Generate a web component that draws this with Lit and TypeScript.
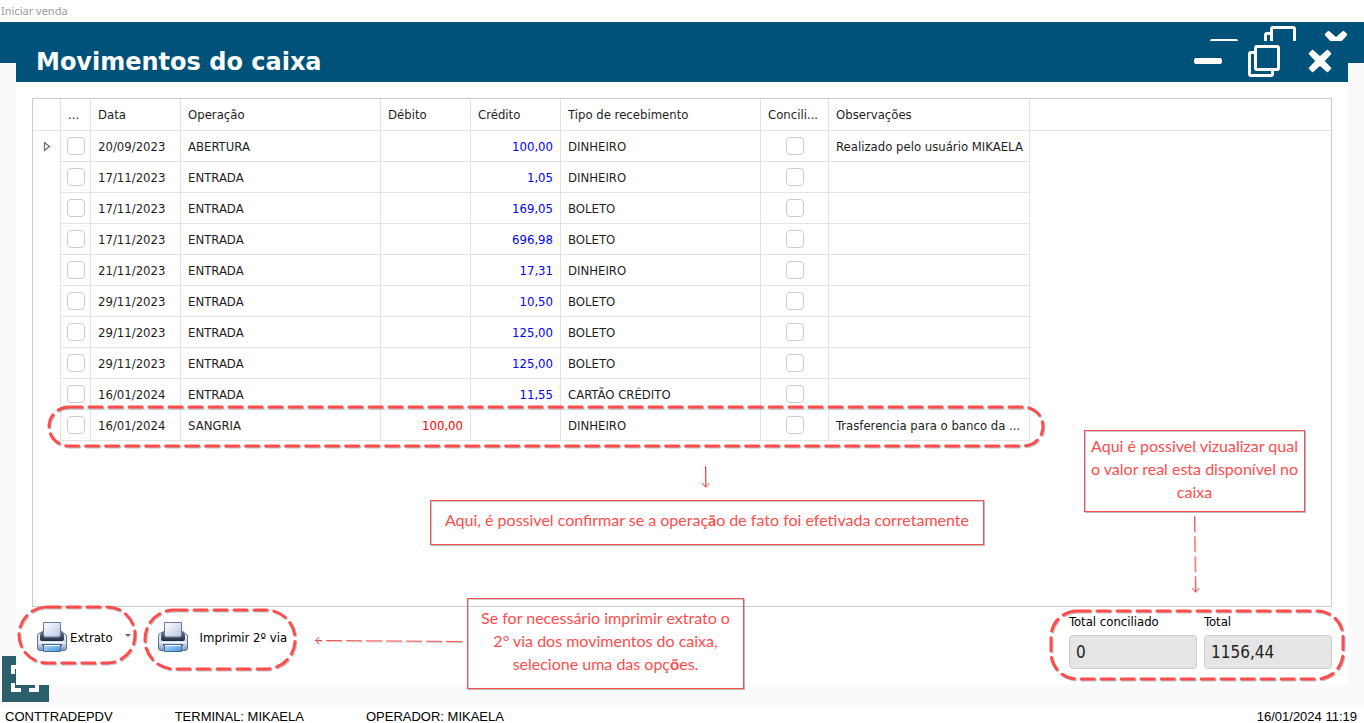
import { LitElement, html, svg, css, nothing } from "lit";
import { customElement, property } from "lit/decorators.js";

interface Movimento {
  data: string;
  operacao: string;
  debito?: string;
  credito?: string;
  tipo: string;
  obs?: string;
}

const MOVIMENTOS: Movimento[] = [
  { data: "20/09/2023", operacao: "ABERTURA", credito: "100,00", tipo: "DINHEIRO", obs: "Realizado pelo usuário MIKAELA" },
  { data: "17/11/2023", operacao: "ENTRADA", credito: "1,05", tipo: "DINHEIRO" },
  { data: "17/11/2023", operacao: "ENTRADA", credito: "169,05", tipo: "BOLETO" },
  { data: "17/11/2023", operacao: "ENTRADA", credito: "696,98", tipo: "BOLETO" },
  { data: "21/11/2023", operacao: "ENTRADA", credito: "17,31", tipo: "DINHEIRO" },
  { data: "29/11/2023", operacao: "ENTRADA", credito: "10,50", tipo: "BOLETO" },
  { data: "29/11/2023", operacao: "ENTRADA", credito: "125,00", tipo: "BOLETO" },
  { data: "29/11/2023", operacao: "ENTRADA", credito: "125,00", tipo: "BOLETO" },
  { data: "16/01/2024", operacao: "ENTRADA", credito: "11,55", tipo: "CARTÃO CRÉDITO" },
  { data: "16/01/2024", operacao: "SANGRIA", debito: "100,00", tipo: "DINHEIRO", obs: "Trasferencia para o banco da ..." },
];

/** Blue caption bar with the three window buttons. */
@customElement("title-bar")
export class TitleBar extends LitElement {
  @property() caption = "";

  static styles = css`
    :host {
      display: flex;
      align-items: center;
      justify-content: space-between;
      height: 41px;
      padding: 0 12px 1px 20px;
      box-sizing: border-box;
      background: #00527a;
      color: #fff;
    }
    .caption {
      margin: 0;
      padding-top: 2px;
      font: bold 24px/32px "DejaVu Sans", Verdana, sans-serif;
    }
    .buttons {
      display: flex;
      gap: 24px;
      margin-left: auto;
    }
    .button {
      display: block;
      width: 32px;
      height: 32px;
      padding: 0;
      border: 0;
      background: none;
      color: inherit;
    }
    .icon {
      display: block;
    }
  `;

  render() {
    return html`
      ${this.caption ? html`<h1 class="caption">${this.caption}</h1>` : nothing}
      <div class="buttons">
        <button class="button" aria-label="Minimizar">
          <svg class="icon" width="32" height="32" viewBox="0 0 32 32"><rect x="2" y="13" width="28" height="6" rx="2" fill="currentColor" /></svg>
        </button>
        <button class="button" aria-label="Restaurar">
          <svg class="icon" width="32" height="32" viewBox="0 0 32 32" fill="none" stroke="currentColor" stroke-width="3">
            <rect x="7.5" y="1.5" width="23" height="23" rx="1.5" />
            <path d="M7 7.500H3Q1.500 7.500 1.500 9V29Q1.500 30.500 3 30.500H23Q24.500 30.500 24.500 29V25" />
          </svg>
        </button>
        <button class="button" aria-label="Fechar">
          <svg class="icon" width="32" height="32" viewBox="0 0 32 32" fill="currentColor">
            <path d="M8.600 5.500L16 12.200L23.400 5.500L26.500 8.600L19.800 16L26.500 23.400L23.400 26.500L16 19.800L8.600 26.500L5.500 23.400L12.200 16L5.500 8.600Z" stroke="currentColor" stroke-width="1.6" stroke-linejoin="round" />
          </svg>
        </button>
      </div>
    `;
  }
}

@customElement("printer-icon")
export class PrinterIcon extends LitElement {
  static styles = css`
    :host {
      display: block;
      width: 32px;
      height: 32px;
    }
  `;

  render() {
    return html`
      <svg width="32" height="32" viewBox="0 0 32 32" aria-hidden="true">
        <defs>
          <linearGradient id="sheet" x1="0" y1="0" x2="1" y2="1"><stop offset="0" stop-color="#fff" /><stop offset="1" stop-color="#b9c6e2" /></linearGradient>
          <linearGradient id="body" x1="0" y1="0" x2="0" y2="1"><stop offset="0" stop-color="#e9eef8" /><stop offset="0.6" stop-color="#d3dcec" /><stop offset="1" stop-color="#8292b8" /></linearGradient>
          <linearGradient id="slot" x1="0" y1="0" x2="0" y2="1"><stop offset="0" stop-color="#6d7b96" /><stop offset="1" stop-color="#20293b" /></linearGradient>
          <linearGradient id="out" x1="0" y1="0" x2="1" y2="1"><stop offset="0" stop-color="#b9e1fa" /><stop offset="1" stop-color="#3c93dc" /></linearGradient>
        </defs>
        <path d="M1.500 14Q1.500 11 5 10.500H26Q29.500 11 30.500 14V26Q30.500 28.500 28 28.500H4Q1.500 28.500 1.500 26Z" fill="url(#body)" stroke="#6272a0" />
        <path d="M6 9H26L28 12.500V17Q28 19 26 19H6Q4 19 4 17V12.500Z" fill="url(#slot)" />
        <path d="M7.500 0.500H24.500V13L23.500 15H8.500L7.500 13Z" fill="url(#sheet)" stroke="#6a78a0" />
        <path d="M7 16.500H25" stroke="#39445c" />
        <path d="M3 20.500H29" stroke="#fff" />
        <path d="M6 22H26V24H6Z" fill="#4b5b84" />
        <path d="M7.500 22.500H24.500V29.500H7.500Z" fill="url(#out)" stroke="#47699f" />
        <path d="M8 23.500H24" stroke="#fff" />
      </svg>
    `;
  }
}

/** Hand-marked dashed outline that fills its own box. */
@customElement("dashed-ring")
export class DashedRing extends LitElement {
  @property({ type: Number }) radius = 24;

  static styles = css`
    :host {
      display: block;
      pointer-events: none;
    }
    .ring {
      display: block;
      width: 100%;
      height: 100%;
      overflow: visible;
      filter: drop-shadow(1px 1px 0 rgba(0, 0, 0, 0.25));
    }
  `;

  render() {
    return html`
      <svg class="ring">
        ${svg`<rect width="100%" height="100%" rx=${this.radius} fill="none" stroke="#ff4d4d" stroke-width="3" stroke-linecap="round" stroke-dasharray="13 7" />`}
      </svg>
    `;
  }
}

@customElement("app-root")
export class AppRoot extends LitElement {
  static styles = css`
    :host {
      display: grid;
      grid-template-rows: auto 1fr auto;
      position: relative;
      min-height: 100vh;
      background: #fff;
      color: #1e1e1e;
      font: 13px/16px "DejaVu Sans Condensed", Tahoma, "DejaVu Sans", sans-serif;
      --line: #e3e3e3;
      --edge: #cccccc;
      --mark: #ff4d4d;
    }
    .menu {
      height: 22px;
      padding-left: 1px;
      color: #9b9b9b;
      font: 11px/22px "Noto Sans", "Open Sans", sans-serif;
    }
    .desk {
      display: grid;
      background: #fafafa;
    }
    .back,
    .dialog {
      grid-area: 1 / 1;
      min-width: 0;
    }
    .back {
      display: flex;
      flex-direction: column;
      justify-content: space-between;
      align-items: stretch;
    }
    .fullscreen {
      width: 47px;
      height: 46px;
      margin: 0 0 3px 2px;
      padding: 0;
      border: 0;
      background: #2a5f6b;
    }
    .icon {
      display: block;
    }
    .dialog {
      display: flex;
      flex-direction: column;
      margin: 19px 16px 20px;
      background: #fff;
      z-index: 1;
    }
    .panel {
      flex: 1;
      margin: 16px 16px 0;
      border: 1px solid var(--edge);
    }
    .grid {
      width: 100%;
      table-layout: fixed;
      border-spacing: 0;
    }
    .grid th,
    .grid td {
      height: 29px;
      padding: 1px 7px 0;
      border-right: 1px solid var(--line);
      border-bottom: 1px solid var(--line);
      text-align: left;
      font-weight: normal;
      white-space: nowrap;
      overflow: hidden;
    }
    .grid th {
      height: 31px;
      padding-top: 0;
    }
    .grid .filler {
      border-right: 0;
    }
    .grid td.filler,
    .grid td.marker {
      border-bottom: 0;
    }
    .grid .tick {
      padding: 0 5px;
    }
    .grid .number {
      text-align: right;
    }
    .credit {
      color: #0000ff;
    }
    .debit {
      color: #ff0000;
    }
    .c-marker {
      width: 28px;
    }
    .c-tick {
      width: 30px;
    }
    .c-short {
      width: 90px;
    }
    .c-long {
      width: 200px;
    }
    .c-conc {
      width: 68px;
    }
    .c-obs {
      width: 201px;
    }
    .box {
      display: block;
      appearance: none;
      box-sizing: border-box;
      width: 18px;
      height: 18px;
      margin: 0 auto;
      border: 1px solid var(--edge);
      border-radius: 4px;
      background: #fff;
    }
    .footer {
      display: flex;
      justify-content: space-between;
      height: 78px;
      padding: 7px 16px 0 20px;
      box-sizing: border-box;
    }
    .tools {
      display: flex;
      align-items: center;
      gap: 26px;
      height: 48px;
    }
    .tool {
      display: flex;
      align-items: center;
      padding: 0;
      border: 0;
      background: none;
      color: #000;
      font: inherit;
    }
    .name {
      padding-left: 2px;
    }
    .name-far {
      padding-left: 11px;
    }
    .caret {
      margin: 0 0 6px 12px;
      border: 3px solid transparent;
      border-top-color: #666;
      border-bottom: 0;
    }
    .totals {
      display: flex;
      gap: 7px;
    }
    .total {
      display: flex;
      flex-direction: column;
      gap: 5px;
      color: #000;
    }
    .value {
      box-sizing: border-box;
      width: 128px;
      height: 34px;
      padding: 0 6px;
      border: 1px solid var(--edge);
      border-radius: 4px;
      background: #e5e5e5;
      color: #222;
      font: 17px/20px "DejaVu Sans Condensed", Tahoma, sans-serif;
    }
    .status {
      display: flex;
      height: 18px;
      padding: 0 7px 0 5px;
      color: #000;
      font: 13px/23px "Liberation Sans", Arial, sans-serif;
      gap: 62px;
    }
    .clock {
      margin-left: auto;
    }
    .mark {
      position: absolute;
      z-index: 2;
      filter: drop-shadow(1px 1px 0 rgba(0, 0, 0, 0.2));
    }
    .note {
      position: absolute;
      z-index: 2;
      box-sizing: border-box;
      margin: 0;
      border: 1px solid var(--mark);
      box-shadow: 1px 1px 0 #bbb, inset 1px 1px 0 #ccc;
      color: var(--mark);
      text-align: center;
      white-space: nowrap;
      font: 16px/23px "Lato", sans-serif;
    }
    .ring {
      position: absolute;
      z-index: 2;
    }
    .ring-row {
      left: 49px;
      top: 407px;
      width: 994px;
      height: 39px;
    }
    .ring-extrato {
      left: 19px;
      bottom: 60px;
      width: 116px;
      height: 56px;
    }
    .ring-via {
      left: 145px;
      bottom: 54px;
      width: 150px;
      height: 59px;
    }
    .ring-total {
      right: 21px;
      bottom: 44px;
      width: 292px;
      height: 68px;
    }
    .note-row {
      left: 430px;
      top: 500px;
      width: 554px;
      padding: 7px 0 13px;
    }
    .note-total {
      right: 59px;
      top: 430px;
      width: 221px;
      padding: 3px 0 8px;
    }
    .note-via {
      left: 467px;
      bottom: 34px;
      width: 277px;
      padding: 7px 0 13px;
    }
    .arrow-row {
      left: 700px;
      top: 466px;
    }
    .arrow-total {
      right: 163px;
      top: 516px;
    }
    .arrow-via {
      left: 314px;
      bottom: 76px;
    }
  `;

  private renderRow(m: Movimento, i: number) {
    return html`
      <tr>
        <td class="marker">
          ${i === 0
            ? html`<svg class="icon" width="14" height="10" viewBox="0 0 14 10"><path d="M4.500 0.500V8.500L9.500 4.500Z" fill="none" stroke="#666" stroke-width="1.200" /></svg>`
            : nothing}
        </td>
        <td class="tick"><input class="box" type="checkbox" aria-label="Selecionar linha ${i + 1}" /></td>
        <td>${m.data}</td>
        <td>${m.operacao}</td>
        <td class="number debit">${m.debito}</td>
        <td class="number credit">${m.credito}</td>
        <td>${m.tipo}</td>
        <td class="tick"><input class="box" type="checkbox" aria-label="Conciliar linha ${i + 1}" /></td>
        <td>${m.obs}</td>
        <td class="filler"></td>
      </tr>
    `;
  }

  render() {
    return html`
      <div class="menu">Iniciar venda</div>

      <main class="desk">
        <div class="back">
          <title-bar></title-bar>
          <button class="fullscreen" aria-label="Tela cheia">
            <svg class="icon" width="47" height="46" viewBox="0 0 47 46" fill="none" stroke="#fff" stroke-width="4">
              <path d="M11 18V11H19M29 11H35V18M11 27V34H19M27 34H35V27" />
            </svg>
          </button>
        </div>

        <section class="dialog">
          <title-bar caption="Movimentos do caixa"></title-bar>
          <div class="panel">
            <table class="grid">
              <colgroup>
                <col class="c-marker" /><col class="c-tick" /><col class="c-short" /><col class="c-long" /><col class="c-short" />
                <col class="c-short" /><col class="c-long" /><col class="c-conc" /><col class="c-obs" /><col />
              </colgroup>
              <thead>
                <tr>
                  <th></th>
                  <th>...</th>
                  <th>Data</th>
                  <th>Operação</th>
                  <th>Débito</th>
                  <th>Crédito</th>
                  <th>Tipo de recebimento</th>
                  <th>Concili...</th>
                  <th>Observações</th>
                  <th class="filler"></th>
                </tr>
              </thead>
              <tbody>
                ${MOVIMENTOS.map((m, i) => this.renderRow(m, i))}
              </tbody>
            </table>
          </div>
          <footer class="footer">
            <div class="tools">
              <button class="tool"><printer-icon></printer-icon><span class="name">Extrato</span><span class="caret"></span></button>
              <button class="tool"><printer-icon></printer-icon><span class="name-far">Imprimir 2º via</span></button>
            </div>
            <div class="totals">
              <label class="total">Total conciliado<input class="value" readonly .value=${"0"} /></label>
              <label class="total">Total<input class="value" readonly .value=${"1156,44"} /></label>
            </div>
          </footer>
        </section>
      </main>

      <div class="status">
        <span>CONTTRADEPDV</span>
        <span>TERMINAL: MIKAELA</span>
        <span>OPERADOR: MIKAELA</span>
        <time class="clock">16/01/2024 11:19</time>
      </div>

      <dashed-ring class="ring ring-row" radius="20"></dashed-ring>
      <dashed-ring class="ring ring-extrato" radius="28"></dashed-ring>
      <dashed-ring class="ring ring-via" radius="29"></dashed-ring>
      <dashed-ring class="ring ring-total" radius="26"></dashed-ring>

      <p class="note note-row">Aqui, é possivel confirmar se a operaç<b>ã</b>o de fato foi efetivada corretamente</p>
      <p class="note note-total">Aqui é possivel vizualizar qual<br />o valor real esta disponível no<br />caixa</p>
      <p class="note note-via">Se for necessário imprimir extrato o<br />2° via dos movimentos do caixa,<br />selecione uma das opç<b>õ</b>es.</p>

      <svg class="mark arrow-row" width="12" height="24" fill="none" stroke="#ff4d4d">
        <path d="M5.500 0V21M2 17L5.500 21L9 17" />
      </svg>
      <svg class="mark arrow-total" width="12" height="80" fill="none" stroke="#ff4d4d">
        <path d="M5.500 0L6.500 76" stroke-dasharray="16 4" />
        <path d="M3 72L6.500 76L10 72" />
      </svg>
      <svg class="mark arrow-via" width="150" height="12" fill="none" stroke="#ff4d4d">
        <path d="M148 6.500L8 5.500" stroke-dasharray="16 4" />
        <path d="M8 5.500H1M5 2L1.500 5.500L5 9" />
      </svg>
    `;
  }
}
